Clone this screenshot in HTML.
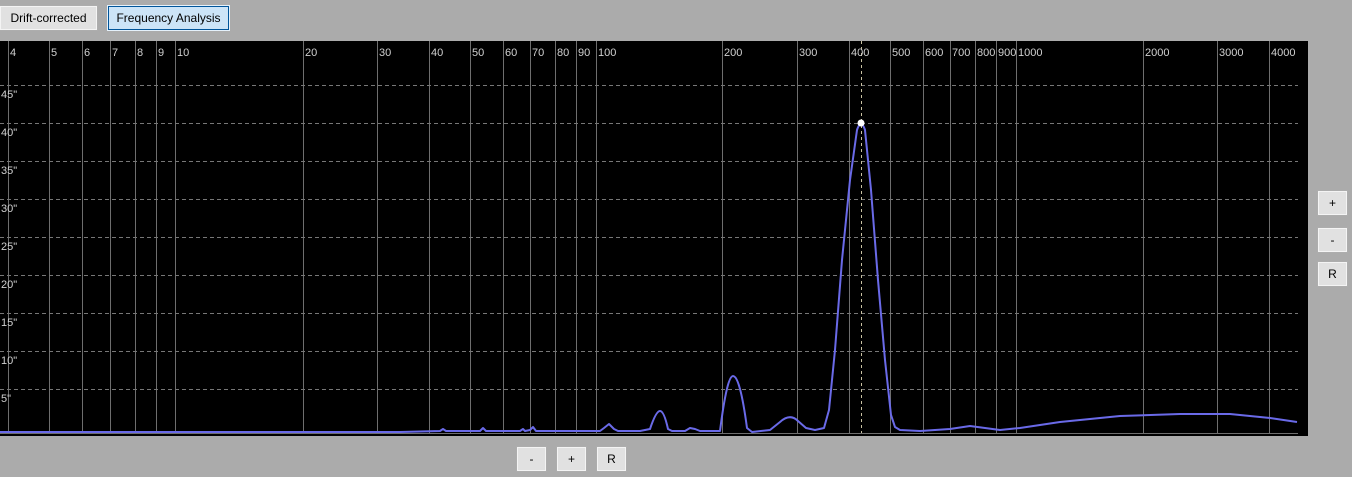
<html><head><style>
body{margin:0;background:#ababab;width:1352px;height:477px;overflow:hidden;font-family:"Liberation Sans",sans-serif;position:relative}
.b{position:absolute;background:#e1e1e1;border:1px solid #f4f4f4;outline:1px solid #adadad;font-size:12px;color:#000;display:flex;align-items:center;justify-content:center;box-sizing:border-box}
</style></head><body>
<div class="b" style="left:0;top:6px;width:97px;height:24px">Drift-corrected</div>
<div class="b" style="left:108px;top:6px;width:121px;height:24px;background:#cce4f7;border:1px solid #005499;outline:1px solid #e5f1fb">Frequency Analysis</div>
<div class="b" style="left:1318px;top:191px;width:29px;height:24px">+</div>
<div class="b" style="left:1318px;top:228px;width:29px;height:24px">-</div>
<div class="b" style="left:1318px;top:262px;width:29px;height:24px">R</div>
<div class="b" style="left:517px;top:447px;width:29px;height:24px">-</div>
<div class="b" style="left:557px;top:447px;width:29px;height:24px">+</div>
<div class="b" style="left:597px;top:447px;width:29px;height:24px">R</div>
<svg style="position:absolute;left:0;top:41px" width="1308" height="395" viewBox="0 41 1308 395">
<rect x="0" y="41" width="1308" height="395" fill="#000"/>
<g stroke="#6e6e6e" stroke-width="1">
<path d="M8.5 41V433M49.5 41V433M82.5 41V433M110.5 41V433M135.5 41V433M156.5 41V433M175.5 41V433M303.5 41V433M377.5 41V433M429.5 41V433M470.5 41V433M503.5 41V433M530.5 41V433M555.5 41V433M576.5 41V433M596.5 41V433M722.5 41V433M797.5 41V433M849.5 41V433M890.5 41V433M923.5 41V433M950.5 41V433M975.5 41V433M996.5 41V433M1016.5 41V433M1143.5 41V433M1217.5 41V433M1269.5 41V433"/>
<path d="M0 433.5H1298"/>
</g>
<g stroke="#777" stroke-dasharray="4 3"><path d="M0 85.5H1298M0 123.5H1298M0 161.5H1298M0 199.5H1298M0 237.5H1298M0 275.5H1298M0 313.5H1298M0 351.5H1298M0 389.5H1298"/></g>
<path d="M861.5 41V433" stroke="#c8c0a0" stroke-dasharray="3 3"/>
<g fill="#d0d0d0" font-size="11">
<text x="10" y="56">4</text><text x="51" y="56">5</text><text x="84" y="56">6</text><text x="112" y="56">7</text><text x="137" y="56">8</text><text x="158" y="56">9</text><text x="177" y="56">10</text><text x="305" y="56">20</text><text x="379" y="56">30</text><text x="431" y="56">40</text><text x="472" y="56">50</text><text x="505" y="56">60</text><text x="532" y="56">70</text><text x="557" y="56">80</text><text x="578" y="56">90</text><text x="598" y="56">100</text><text x="724" y="56">200</text><text x="799" y="56">300</text><text x="851" y="56">400</text><text x="892" y="56">500</text><text x="925" y="56">600</text><text x="952" y="56">700</text><text x="977" y="56">800</text><text x="998" y="56">900</text><text x="1018" y="56">1000</text><text x="1145" y="56">2000</text><text x="1219" y="56">3000</text><text x="1271" y="56">4000</text>
<text x="1" y="98">45"</text><text x="1" y="136">40"</text><text x="1" y="174">35"</text><text x="1" y="212">30"</text><text x="1" y="250">25"</text><text x="1" y="288">20"</text><text x="1" y="326">15"</text><text x="1" y="364">10"</text><text x="1" y="402">5"</text>
</g>
<path fill="none" stroke="#6a6ae8" stroke-width="2" stroke-linejoin="round" d="M0 432L400 432L440 431L443 429L446 431L480 431L483 428L486 431L520 431L523 429L525 431L530 430L533 427L536 431L570 431L600 431L604 428L609 424L614 429L618 431L640 431L650 429Q656 411 660 411Q664 411 668 429L672 431L685 431L690 428L695 429L700 431L720 431Q727 376 733 376Q740 376 747 428L752 432L770 430L780 422Q790 413 798 421L806 428L815 430L824 428L829 410L835 350L842 260L850 180L857 130Q861 118 865 130L871 190L878 280L885 360L891 415L895 427L900 430L920 431L950 429L970 426L985 428L1000 430L1020 428L1060 422L1120 416L1180 414L1230 414L1270 418L1297 422"/>
<circle cx="861" cy="123" r="3.5" fill="#fff"/>
</svg>
</body></html>
